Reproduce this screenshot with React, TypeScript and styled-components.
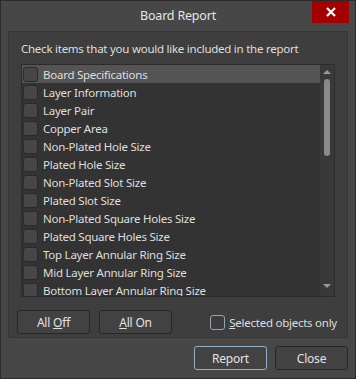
import React, { useState } from 'react';
import styled, { createGlobalStyle } from 'styled-components';

const GlobalStyle = createGlobalStyle`
  html, body {
    margin: 0;
    padding: 0;
    background: #474747;
  }
  * {
    box-sizing: border-box;
  }
`;

const Window = styled.div`
  width: 356px;
  height: 379px;
  border: 1px solid #2b2b2b;
  background: #474747;
  display: flex;
  flex-direction: column;
  font-family: "Noto Sans", "Open Sans", sans-serif;
  font-size: 11.5px;
  letter-spacing: -0.25px;
  color: #dedede;
  overflow: hidden;
`;

const TitleBar = styled.div`
  height: 30px;
  display: grid;
  grid-template-columns: 1fr auto 1fr;
  align-items: start;
`;

const Title = styled.div`
  grid-column: 2;
  line-height: 30px;
  font-size: 12.5px;
  letter-spacing: -0.2px;
  color: #e4e4e4;
`;

const CloseX = styled.button`
  grid-column: 3;
  justify-self: end;
  margin-right: 6px;
  margin-top: -1px;
  width: 37px;
  height: 23px;
  border: none;
  padding: 0;
  background: #a40000;
  display: flex;
  align-items: center;
  justify-content: center;
`;

const Panel = styled.div`
  margin: 0 7px;
  height: 307px;
  border: 1px solid #363636;
  background: #3e3e3e;
  display: flex;
  flex-direction: column;
`;

const Hint = styled.div`
  margin: 9px 12px 0 12px;
  line-height: 16px;
  height: 16px;
  white-space: nowrap;
`;

const ListBox = styled.div`
  margin: 7px 12px 0 12px;
  height: 233px;
  border: 1px solid #2c2c2c;
  background: #333333;
  display: flex;
  overflow: hidden;
`;

const Items = styled.div`
  flex: 1;
  display: flex;
  flex-direction: column;
`;

const Row = styled.div<{ $active?: boolean }>`
  height: 18px;
  flex: none;
  display: flex;
  align-items: center;
  gap: 5px;
  padding-left: 1px;
  background: ${p => (p.$active ? '#545454' : 'transparent')};
  white-space: nowrap;
`;

const Box = styled.span<{ $focus?: boolean }>`
  width: 15px;
  height: 15px;
  flex: none;
  border-radius: 3px;
  border: 1px solid ${p => (p.$focus ? '#8fa6b8' : '#2a2a2a')};
  background: ${p => (p.$focus ? '#3c3c3c' : '#474747')};
`;

const ScrollBar = styled.div`
  width: 14px;
  flex: none;
  background: #393939;
  display: flex;
  flex-direction: column;
  align-items: center;
`;

const Arrow = styled.div<{ $down?: boolean }>`
  width: 0;
  height: 0;
  border-left: 4px solid transparent;
  border-right: 4px solid transparent;
  ${p =>
    p.$down
      ? 'border-top: 4px solid #9a9a9a; margin-top: auto; margin-bottom: 8px;'
      : 'border-bottom: 4px solid #9a9a9a; margin-top: 5px;'}
`;

const Thumb = styled.div`
  width: 6px;
  height: 77px;
  margin-top: 5px;
  border-radius: 3px;
  background: #8a8a8a;
`;

const ButtonRow = styled.div`
  margin: 13px 10px 0 8px;
  display: flex;
  align-items: center;
  gap: 9px;
`;

const Btn = styled.button<{ $default?: boolean }>`
  width: 73px;
  height: 24px;
  padding: 0;
  border-radius: 3px;
  border: 1px solid ${p => (p.$default ? '#8fb0c6' : '#272727')};
  background: #424242;
  color: #e2e2e2;
  font-family: inherit;
  font-size: 12px;
  letter-spacing: -0.2px;
`;

const Check = styled.label`
  margin-left: auto;
  display: flex;
  align-items: center;
  gap: 4px;
  white-space: nowrap;
`;

const Footer = styled.div`
  margin: 8px 7px 0 0;
  display: flex;
  justify-content: flex-end;
  gap: 8px;
`;

const items = [
  'Board Specifications',
  'Layer Information',
  'Layer Pair',
  'Copper Area',
  'Non-Plated Hole Size',
  'Plated Hole Size',
  'Non-Plated Slot Size',
  'Plated Slot Size',
  'Non-Plated Square Holes Size',
  'Plated Square Holes Size',
  'Top Layer Annular Ring Size',
  'Mid Layer Annular Ring Size',
  'Bottom Layer Annular Ring Size',
];

const App = () => {
  const [active] = useState(0);
  return (
    <>
      <GlobalStyle />
      <Window>
        <TitleBar>
          <Title>Board Report</Title>
          <CloseX aria-label="close">
            <svg width="10" height="10" viewBox="0 0 10 10">
              <path d="M1 1 L9 9 M9 1 L1 9" stroke="#fff" strokeWidth="2.2" />
            </svg>
          </CloseX>
        </TitleBar>
        <Panel>
          <Hint>Check items that you would like included in the report</Hint>
          <ListBox>
            <Items>
              {items.map((name, idx) => (
                <Row key={idx} $active={idx === active}>
                  <Box />
                  {name}
                </Row>
              ))}
            </Items>
            <ScrollBar>
              <Arrow />
              <Thumb />
              <Arrow $down />
            </ScrollBar>
          </ListBox>
          <ButtonRow>
            <Btn>All <u>O</u>ff</Btn>
            <Btn><u>A</u>ll On</Btn>
            <Check>
              <Box $focus />
              <span><u>S</u>elected objects only</span>
            </Check>
          </ButtonRow>
        </Panel>
        <Footer>
          <Btn $default>Report</Btn>
          <Btn>Close</Btn>
        </Footer>
      </Window>
    </>
  );
};

export default App;
